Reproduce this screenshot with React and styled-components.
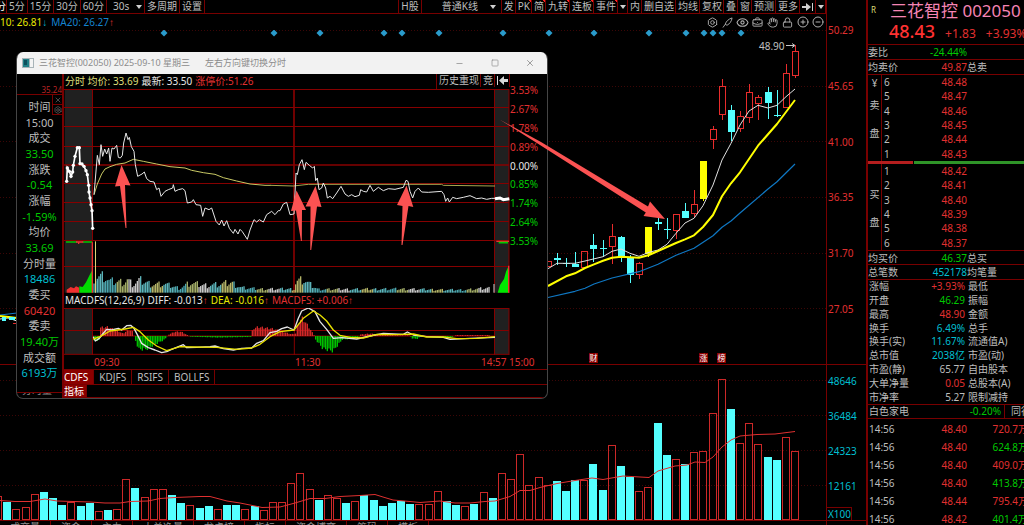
import React, { useState } from "react";
import styled, { createGlobalStyle, css } from "styled-components";
import {
  Bolt,
  BriefcaseBusiness,
  CircleMinus,
  CirclePlus,
  Eye,
  Hand,
  Lock,
  Minus,
  Square,
  X,
} from "lucide-react";

const colors = {
  line: "#780000",
  grid: "#3c0606",
  red: "#e03030",
  candle: "#e82c2c",
  green: "#00c800",
  cyan: "#54ffff",
  teal: "#00bfd0",
  yellow: "#ffff00",
  text: "#bdbdbd",
  white: "#e6e6e6",
  arrow: "#fb5252",
};

const tones = {
  red: colors.red,
  green: colors.green,
  cyan: colors.teal,
  grey: colors.text,
  white: colors.white,
  yellow: "#e8e800",
  olive: "#dede78",
  blue: "#1484d0",
};

//----------------------------------------------------------------
// data

const periods = ["5分", "15分", "30分", "60分"];

const tools = [
  { label: "发" },
  { label: "PK", mark: true },
  { label: "简", mark: true },
  { label: "九转", mark: true },
  { label: "连板", mark: true },
  { label: "事件", mark: true },
  { icon: "down", name: "更多事件" },
  { label: "内" },
  { label: "删自选" },
  { label: "均线" },
  { label: "复权" },
  { label: "叠" },
  { label: "窗" },
  { label: "预测" },
  { label: "更多" },
  { icon: "end", name: "移到末尾" },
  { icon: "down", name: "展开" },
];

const priceTicks = ["50.29", "45.65", "41.00", "36.35", "31.70", "27.05"];
const volumeTicks = ["48646", "36484", "24323", "12161"];

// [type, body top, body bottom, high, low]
const candles = [
  ["r", 261, 267, 261, 267],
  ["c", 258, 260, 253, 265],
  ["c", 263, 264, 258, 267],
  ["c", 264, 267, 252, 267],
  ["r", 251, 268, 251, 268],
  ["c", 245, 249, 234, 262],
  ["c", 248, 249, 240, 257],
  ["r", 236, 247, 224, 264],
  ["c", 237, 257, 236, 262],
  ["c", 257, 275, 255, 283],
  ["r", 263, 275, 262, 279],
  ["y", 227, 254, 227, 257],
  ["c", 222, 224, 218, 230],
  ["c", 229, 230, 218, 239],
  ["r", 214, 231, 214, 239],
  ["c", 211, 218, 203, 218],
  ["r", 204, 214, 190, 217],
  ["y", 161, 199, 161, 201],
  ["r", 129, 140, 126, 149],
  ["r", 86, 115, 79, 120],
  ["c", 110, 132, 105, 141],
  ["r", 116, 129, 111, 132],
  ["r", 92, 118, 84, 123],
  ["r", 97, 104, 95, 120],
  ["c", 92, 103, 87, 119],
  ["c", 115, 116, 90, 117],
  ["r", 73, 108, 64, 108],
  ["r", 51, 76, 45, 78],
];

const volumes = (
  "r24 c18 r11 r13 r26 c28 c22 c15 r18 c14 c17 r9 c10 r11 r41 c32 r23 r31 r31 c25 c17 r15 " +
  "c12 c14 r11 c15 c15 r11 c14 r10 r18 r18 r37 r47 r31 c20 r25 r22 c17 r19 c25 c20 c14 c17 " +
  "c19 c16 r16 r16 r29 c19 c15 r14 c16 r28 c22 r47 r41 r66 r35 r43 r35 c39 c29 c40 r40 c56 " +
  "c30 r75 c54 c43 r29 r33 c97 c65 r61 c56 r68 r69 r107 r141 c111 r77 r97 r76 c63 c60 r83 r69"
)
  .split(" ")
  .map((v) => [v[0], Number(v.slice(1))]);

const diamonds = [
  164, 274, 320, 384, 402, 439, 503, 549, 594, 649, 686, 704, 713, 722, 741,
];

const events = [
  { x: 594, label: "财" },
  { x: 704, label: "涨" },
  { x: 722, label: "榜" },
];

const footerTabs = ["成交量", "资金", "主力", "大单净量", "龙虎榜", "指标", "资金博弈", "筹码", "模板"];

const sells = [
  [6, "48.48"],
  [5, "48.47"],
  [4, "48.46"],
  [3, "48.45"],
  [2, "48.44"],
  [1, "48.43"],
];

const buys = [
  [1, "48.42"],
  [2, "48.41"],
  [3, "48.40"],
  [4, "48.39"],
  [5, "48.38"],
  [6, "48.37"],
];

const stats = [
  ["涨幅", "+3.93%", "red", "最低"],
  ["开盘", "46.29", "green", "振幅"],
  ["最高", "48.90", "red", "金额"],
  ["换手", "6.49%", "cyan", "总手"],
  ["换手(实)", "11.67%", "cyan", "流通值A)"],
  ["总市值", "2038亿", "cyan", "市盈(动)"],
  ["市盈(静)", "65.77", "grey", "自由股本"],
  ["大单净量", "0.05", "red", "总股本(A)"],
  ["市净率", "5.27", "grey", "限制减持"],
];

const deals = [
  ["14:56", "48.40", "720.7万", "red"],
  ["14:56", "48.40", "624.8万", "green"],
  ["14:56", "48.40", "409.0万", "red"],
  ["14:56", "48.40", "413.8万", "green"],
  ["14:56", "48.44", "795.4万", "red"],
  ["14:56", "48.42", "401.4万", "green"],
];

const details = [
  ["时间", "15:00", "grey"],
  ["成交", "33.50", "green"],
  ["涨跌", "-0.54", "green"],
  ["涨幅", "-1.59%", "green"],
  ["均价", "33.69", "green"],
  ["分时量", "18486", "cyan"],
  ["委买", "60420", "red"],
  ["委卖", "19.40万", "green"],
  ["成交额", "6193万", "cyan"],
];

const percents = [
  ["3.53%", "red"],
  ["2.67%", "red"],
  ["1.78%", "red"],
  ["0.89%", "red"],
  ["0.00%", "white"],
  ["0.85%", "green"],
  ["1.74%", "green"],
  ["2.64%", "green"],
  ["3.53%", "green"],
];

const indicators = ["CDFS", "KDJFS", "RSIFS", "BOLLFS"];

// pre-open auction prices
const auction = [
  [170, 400], [172, 360], [178, 370], [183, 385], [188, 372], [190, 352],
  [195, 325], [202, 299], [208, 299], [210, 347], [216, 348], [222, 355],
  [228, 368], [232, 380], [236, 412], [237, 432], [240, 450], [243, 470],
  [246, 488], [248, 541],
];

// height of the minute bars over the day
const minuteShape = [
  [90, 55], [118, 58], [135, 40], [180, 38], [188, 46], [205, 28], [225, 44],
  [260, 30], [300, 30], [345, 16], [375, 34], [420, 26], [470, 30], [500, 36],
  [530, 18], [580, 13], [690, 13], [694, 40], [715, 46], [740, 26], [760, 12],
  [830, 12], [1020, 13], [1140, 10], [1200, 10], [1270, 16],
];

const macdShape = [
  [88, -16], [104, -14], [106, 28], [130, 30], [160, 16], [175, 8], [192, 20],
  [205, 14], [209, -4], [222, -44], [245, -44], [270, -28], [300, -12],
  [311, 4], [330, 14], [350, 14], [368, 3], [375, -2], [460, -5], [560, -3],
  [564, 24], [580, 30], [625, 24], [680, 6], [693, 8], [700, 42], [712, 60],
  [725, 42], [748, 3], [753, -12], [775, -42], [805, -50], [833, -12],
  [880, -6], [888, 5], [915, 8], [970, 3], [1035, 2], [1044, -9], [1060, -9],
  [1066, -2], [1160, -4], [1175, 3], [1280, 3],
];

const shapeAt = (shape, x) => {
  const n = shape.findIndex((p) => p[0] >= x);
  if (n < 1) return shape[n === 0 ? 0 : shape.length - 1][1];
  const [x0, y0] = shape[n - 1];
  const [x1, y1] = shape[n];
  return y0 + ((y1 - y0) * (x - x0)) / (x1 - x0);
};

const steps = Array.from({ length: 238 }, (_, i) => 88 + i * 5);
const barTones = ["#5cb4ba", "#b4b468", "#5cb4ba", "#c8c8c8", "#a3ad68", "#4ba6ae"];

//----------------------------------------------------------------

const App = () => {
  return (
    <>
      <GlobalStyle />
      <Page>
        <Workspace>
          <ChartColumn>
            <MainToolbar />
            <LegendRow>
              <Tone tone="yellow">
                10: 26.81<Mark $tone="cyan">↓</Mark>
              </Tone>
              <Tone tone="blue">
                MA20: 26.27<Mark $tone="red">↑</Mark>
              </Tone>
              <ChartIcons />
            </LegendRow>
            <PriceChart />
            <VolumeChart />
            <Footer>
              {footerTabs.map((name) => (
                <FooterTab key={name}>{name}</FooterTab>
              ))}
            </Footer>
          </ChartColumn>
          <AxisColumn>
            <PriceAxis>
              {priceTicks.map((t) => (
                <span key={t}>{t}</span>
              ))}
            </PriceAxis>
            <VolumeAxis>
              {volumeTicks.map((t) => (
                <span key={t}>{t}</span>
              ))}
            </VolumeAxis>
            <UnitRow>
              <UnitBox>X100</UnitBox>
            </UnitRow>
          </AxisColumn>
          <IntradayWindow />
          <Arrows />
        </Workspace>
        <QuotePanel />
      </Page>
    </>
  );
};
export default App;

const DownIcon = () => (
  <svg width="6" height="4" viewBox="0 0 6 4">
    <path d="M0 0H6L3 4Z" fill="#d0d0d0" />
  </svg>
);

const EndIcon = () => (
  <svg width="12" height="8" viewBox="0 0 12 8">
    <path d="M0 3H4V0L9 4L4 8V5H0ZM10 0H11V8H10Z" fill="#d0d0d0" />
  </svg>
);

const MainToolbar = () => {
  const [period, setPeriod] = useState("30s");
  return (
    <Toolbar>
      <FirstButton>分</FirstButton>
      {periods.map((p) => (
        <ToolButton key={p} onClick={() => setPeriod(p)}>
          {p}
        </ToolButton>
      ))}
      <SelectBox>
        <ToolSelect
          aria-label="周期"
          value={period}
          onChange={(e) => setPeriod(e.target.value)}
        >
          <option>30s</option>
          {periods.map((p) => (
            <option key={p}>{p}</option>
          ))}
        </ToolSelect>
        <DownIcon />
      </SelectBox>
      <ToolButton>多周期</ToolButton>
      <ToolButton>设置</ToolButton>
      <ToolGroup>
        <ToolButton>H股</ToolButton>
        <SelectBox $wide>
          <ToolSelect aria-label="K线类型">
            <option>普通K线</option>
          </ToolSelect>
          <DownIcon />
        </SelectBox>
        {tools.map((t, i) => (
          <ToolButton key={i} $tight $mark={t.mark} aria-label={t.name}>
            {t.label}
            {t.icon === "down" && <DownIcon />}
            {t.icon === "end" && <EndIcon />}
          </ToolButton>
        ))}
      </ToolGroup>
    </Toolbar>
  );
};

const ChartIcons = () => (
  <IconRow>
    <IconButton aria-label="设置">
      <Bolt size={11} />
    </IconButton>
    <IconButton aria-label="画线">
      <svg width="11" height="11" viewBox="0 0 24 24" fill="none" stroke="currentColor" strokeWidth="2">
        <path d="M2 23L7 16M7 16C9 9 15 4 22 2C21 9 17 15 11 18Z" />
      </svg>
    </IconButton>
    <IconButton aria-label="显示">
      <Eye size={13} />
    </IconButton>
    <IconButton aria-label="工具箱">
      <BriefcaseBusiness size={11} />
    </IconButton>
    <IconButton aria-label="拖动">
      <Hand size={11} />
    </IconButton>
    <IconButton aria-label="锁定">
      <Lock size={11} />
    </IconButton>
    <IconButton aria-label="放大">
      <CirclePlus size={12} />
    </IconButton>
    <IconButton aria-label="缩小">
      <CircleMinus size={12} />
    </IconButton>
  </IconRow>
);

const PriceChart = () => (
  <PriceSvg viewBox="0 30 826 334" preserveAspectRatio="xMinYMin">
    {[30.5, 86.5, 141.5, 197.5, 253.5, 308.5].map((y) => (
      <path key={y} d={`M0 ${y}H826`} stroke={colors.grid} strokeDasharray="1 2" />
    ))}
    {diamonds.map((x) => (
      <path key={x} d={`M${x} 29.5l3.5 3.5l-3.5 3.5l-3.5 -3.5Z`} fill="#2a9bcb" />
    ))}
    {candles.map(([type, top, bottom, high, low], i) => {
      const x = Math.round(795 - (27 - i) * 9.16);
      const fill = { r: "none", c: colors.cyan, y: colors.yellow }[type];
      const stroke = type === "r" ? colors.candle : fill;
      return (
        <g key={i} stroke={stroke} fill={fill} shapeRendering="crispEdges">
          <path d={`M${x + 0.5} ${high}V${top}M${x + 0.5} ${bottom}V${low}`} />
          <rect x={x - 2.5} y={top + 0.5} width="6" height={Math.max(bottom - top - 1, 0)} />
          {bottom - top < 2 && <path d={`M${x - 3} ${top + 0.5}H${x + 4}M${x + 0.5} ${high}V${low}`} />}
        </g>
      );
    })}
    <g fill="none" strokeLinejoin="round">
      <path
        d="M548 297.5L575 291.3L585 288.3L594 284L612 278L639 271.7L658 264.3L676 255.3L694 248.3L713 235.7L722 227.3L731 221L740 213L768 189L777 181.7L795 164M0 315L17 313"
        stroke="#0f78c4"
        strokeWidth="1.2"
      />
      <path
        d="M548 268.7L557 263.3L575 263.3L585 261L603 256.7L612 251.3L621 249L630 253.3L639 256.3L649 252.3L658 250L667 244.3L676 233.3L685 223L694 218.3L703 205.7L713 185L722 160L731 143.3L740 125L749 111L758 105.3L768 108L777 105.3L786 96.7L795 89M0 319L8 318L17 321"
        stroke="#e0e0e0"
      />
      <path
        d="M548 286L566 276.3L575 273.3L585 268L594 264.3L603 260.7L612 257.7L621 256.7L639 257.7L649 255L667 247L676 243L685 239.3L694 235.3L703 227L713 215L722 196.3L731 183.3L740 172.3L758 145.7L777 124L795 100M0 316L17 318"
        stroke={colors.yellow}
        strokeWidth="2"
      />
    </g>
    <path d="M2 317H6V321H2ZM9 317H15V320H9Z" fill={colors.cyan} />
    <path d="M13 323.5H17" stroke={colors.candle} />
    <ChartText x="759" y="50">
      48.90
    </ChartText>
    <path d="M786 45.5H794M792 43.5L795 45.5L792 47.5" stroke="#c8c8c8" fill="none" />
    {events.map((e) => (
      <g key={e.x}>
        <rect x={e.x - 5} y="353" width="9" height="10" fill="#8a0000" />
        <EventText x={e.x - 0.5} y="361">
          {e.label}
        </EventText>
      </g>
    ))}
  </PriceSvg>
);

const VolumeChart = () => (
  <VolumeSvg viewBox="0 365 826 155" preserveAspectRatio="xMinYMin">
    {[380.5, 415.5, 450.5, 485.5].map((y) => (
      <path key={y} d={`M0 ${y}H826`} stroke={colors.grid} strokeDasharray="1 2" />
    ))}
    {volumes.map(([type, h], i) => {
      const x = Math.round(795 - (volumes.length - 1 - i) * 9.16);
      return type === "c" ? (
        <rect key={i} x={x - 4} y={520 - h} width="8" height={h} fill={colors.cyan} />
      ) : (
        <rect key={i} x={x - 3.5} y={520.5 - h} width="7" height={h - 1} fill="none" stroke="#cc2828" />
      );
    })}
    <path
      d="M0 500.5L15 501.5L30 501.5L45 499L57 501L90 502L105 503L120 503L130 501.5L148 501L160 498.5L175 497.5L200 496.5L210 496.5L227 501L240 503L255 506L262 507.5L280 507L295 503L310 498.5L325 498.5L340 496.5L360 495.5L375 494.5L383 497L393 500L410 501.5L420 502.5L440 501L455 503L470 503L485 501.5L495 501L510 496.5L520 490.5L530 490.5L540 487.5L557 483.5L575 480.5L592 478L603 479.5L623 476L640 477L649 477.5L658 471L675 466L687 465L695 462L705 462.5L713 457L722 447L731 440L740 436L757 434.5L775 434L795 431.5"
      stroke={colors.red}
      fill="none"
    />
  </VolumeSvg>
);

//----------------------------------------------------------------

const IntradayWindow = () => {
  const [tab, setTab] = useState("CDFS");
  return (
    <Window>
      <TitleBar>
        <svg width="12" height="10" viewBox="0 0 12 10">
          <rect width="12" height="10" fill="#a8b4b8" />
          <rect x="1" y="1" width="6" height="8" fill="#1f7f86" />
          <rect x="8" y="1" width="3" height="8" fill="#f4f4f4" />
          <rect x="2" y="2" width="3" height="5" fill="#0b4f5c" />
        </svg>
        <span>三花智控(002050) 2025-09-10 星期三</span>
        <Hint>左右方向键切换分时</Hint>
        <WindowButtons>
          <WindowButton aria-label="最小化">
            <Minus size={9} />
          </WindowButton>
          <WindowButton aria-label="最大化">
            <Square size={8} />
          </WindowButton>
          <WindowButton aria-label="关闭">
            <X size={10} />
          </WindowButton>
        </WindowButtons>
      </TitleBar>
      <WindowBody>
        <DetailColumn>
          <TopPrice>35.24</TopPrice>
          <Details>
            {details.map(([name, value, tone]) => (
              <React.Fragment key={name}>
                <dt>{name}</dt>
                <DetailValue $tone={tone}>{value}</DetailValue>
              </React.Fragment>
            ))}
          </Details>
          <DetailButtons>
            <SmallButton aria-label="关闭明细">
              <X size={8} />
            </SmallButton>
            <SmallButton aria-label="明细设置">
              <Bolt size={8} />
            </SmallButton>
          </DetailButtons>
          <HiddenTab>分时量</HiddenTab>
        </DetailColumn>
        <WindowMain>
          <Upper>
            <Plots>
              <InfoRow>
                <Tone tone="olive">分时 均价: 33.69</Tone>
                <Tone tone="white">最新: 33.50</Tone>
                <Tone tone="red">涨停价:51.26</Tone>
                <InfoButtons>
                  <ToolButton $tight>历史重现</ToolButton>
                  <ToolButton $tight>竞</ToolButton>
                  <ToolButton $tight aria-label="收起">
                    <svg width="11" height="9" viewBox="0 0 11 9">
                      <path d="M0 0H1V9H0ZM2 4.5L7 0V3H11V6H7V9Z" fill="#d8d8d8" />
                    </svg>
                  </ToolButton>
                </InfoButtons>
              </InfoRow>
              <MinuteChart />
              <MacdRow>
                <Tone tone="white">MACDFS(12,26,9)</Tone>
                <Tone tone="white">
                  DIFF: -0.013<Mark $tone="red">↑</Mark>
                </Tone>
                <Tone tone="yellow">
                  DEA: -0.016<Mark $tone="red">↑</Mark>
                </Tone>
                <Tone tone="red">
                  MACDFS: +0.006<Mark $tone="red">↑</Mark>
                </Tone>
              </MacdRow>
              <MacdChart />
            </Plots>
            <PercentAxis>
              {percents.map(([label, tone], i) => (
                <Tone key={i} tone={tone}>
                  {label}
                </Tone>
              ))}
            </PercentAxis>
          </Upper>
          <TimeAxis>
            <span />
            <span>09:30</span>
            <span>11:30</span>
            <span>14:57</span>
            <span>15:00</span>
          </TimeAxis>
          <TabRow>
            {indicators.map((name) => (
              <Tab key={name} $active={tab === name} onClick={() => setTab(name)}>
                {name}
              </Tab>
            ))}
          </TabRow>
          <TabRow $last>
            <Tab $active $short>
              指标
            </Tab>
          </TabRow>
        </WindowMain>
      </WindowBody>
    </Window>
  );
};

// three units of the view box make one pixel
const MinuteChart = () => (
  <PlotSvg $height={204} viewBox="0 0 1338 612" preserveAspectRatio="xMinYMin">
    <rect x="2" y="1" width="84" height="610" fill="#202020" />
    <rect x="1293" y="1" width="42" height="610" fill="#202020" />
    <g stroke="#860000" fill="none" strokeWidth="3">
      <path d="M0 1.5H1335M0 55.5H1335M0 112.5H1335M0 172.5H1335M0 283.5H1335M0 340.5H1335M0 397.5H1335M0 454.5H1335M0 532.5H1335" />
      <path d="M0 228H1335M690 0V612" strokeWidth="5" />
      <path d="M85.5 0V612M1291.5 0V612M1335 0V612" />
    </g>
    <g>
      {steps.map((x, i) => {
        if (x > 1285) return null;
        const h = shapeAt(minuteShape, x) * (0.5 + (((i * 37) % 17) / 17) * 0.7);
        return (
          <rect key={x} x={x} y={611 - h} width="4" height={h} fill={barTones[(i * 5 + (i % 7)) % 6]} />
        );
      })}
      <rect x="93" y="457" width="3" height="154" fill="#d8d878" />
      <rect x="1288" y="585" width="4" height="26" fill="#a0a0a0" />
    </g>
    <g>
      <path d="M8 611V602L20 594L30 598L36 592L46 596V611Z" fill="#f03030" />
      <path d="M46 611V592L56 594L66 580L78 556L84 545V611Z" fill="#00dc00" />
      <path d="M6 459H40M56 459H84" stroke="#00c800" strokeWidth="4" />
      <path d="M36 459H58M42 463H46" stroke="#f03030" strokeWidth="4" />
      <path d="M85 460V611" stroke="#f03030" strokeWidth="4" />
      <path d="M1301 611L1308 588L1320 570L1326 548L1334 530V611Z" fill="#00e800" />
      <path d="M1334 530V611M1297 457H1335" stroke="#f03030" strokeWidth="4" />
      <path d="M1304 461H1332" stroke="#00c800" strokeWidth="5" />
    </g>
    <g transform="translate(-162 -123)" fill="none" strokeWidth="3">
      <path
        d="M252 440L262 408L275 378L285 363L300 356L320 349L345 345L370 334L400 340L440 348L480 356L525 360L545 367L580 374L615 379L640 389L680 399L720 408L765 412L782 412"
        stroke="#c8c864"
      />
      <path
        d="M252 440L262 322L268 350L273 290L278 325L284 303L290 318L296 300L300 340L306 300L312 303L320 292L325 328L331 330L337 322L341 285L348 255L354 275L358 268L364 296L372 310L376 350L383 385L396 378L403 372L410 392L420 400L432 402L440 425L447 420L453 445L465 430L475 425L488 420L490 410L495 430L505 425L518 422L525 428L532 465L545 462L550 455L558 470L572 472L578 505L585 480L597 485L605 480L618 520L628 531L635 516L642 534L650 518L658 541L670 556L675 544L684 558L690 544L697 551L712 574L720 546L732 515L740 522L748 515L760 522L770 500L785 490"
        stroke="#e6e6e6"
      />
      <polyline points={auction.join(" ")} stroke="#fff" strokeWidth="5" />
      {auction.map(([x, y]) => (
        <circle key={`${x}-${y}`} cx={x} cy={y} r="5" fill="#fff" />
      ))}
    </g>
    <g transform="translate(618 -123)" fill="none" strokeWidth="3">
      <path d="M0 412L70 414L115 409L515 409L520 412L675 414" stroke="#a8a850" />
      <path
        d="M5 490L15 500L25 488L30 488L40 468L50 463L60 500L72 498L78 375L82 380L88 350L96 335L103 365L108 343L118 352L128 360L133 355L137 398L142 390L147 425L155 420L160 405L167 420L172 450L180 445L188 452L200 435L213 415L225 438L235 445L245 440L255 446L268 442L272 425L280 430L290 432L300 412L310 430L325 418L340 428L355 422L375 424L400 418L408 397L414 400L420 430L428 450L435 430L445 420L455 432L475 433L515 430L522 440L527 460L533 450L538 462L548 448L560 452L580 448L600 443L620 452L635 450L650 454L665 451L675 451"
        stroke="#e6e6e6"
      />
      <path d="M675 452L690 450L700 455L718 452" stroke="#fff" strokeWidth="9" />
    </g>
  </PlotSvg>
);

const MacdChart = () => (
  <PlotSvg $height={47} viewBox="0 0 1338 141" preserveAspectRatio="xMinYMin">
    <rect x="2" y="1" width="84" height="138" fill="#202020" />
    <rect x="1293" y="1" width="42" height="138" fill="#202020" />
    <path
      d="M0 1.5H1335M0 67.5H1335M86 84H1293M0 139H1335M85.5 0V141M691 0V141M1291.5 0V141M1335 0V141"
      stroke="#860000"
      fill="none"
      strokeWidth="3"
    />
    {steps.map((x, i) => {
      const h = shapeAt(macdShape, x) * (0.8 + (i % 3) * 0.1);
      return (
        <rect
          key={x}
          x={x}
          y={h > 0 ? 84 - h : 84}
          width="4"
          height={Math.abs(h)}
          fill={h > 0 ? "#d02828" : "#00c000"}
        />
      );
    })}
    <g fill="none" strokeWidth="4" strokeLinejoin="round">
      <path
        d="M88 86L94 99L106 91L116 78L128 64L143 66L163 61L173 66L188 53L200 52L210 61L223 86L233 106L253 119L273 126L293 134L308 131L323 124L338 118L358 110L368 119L398 118L438 116L453 114L478 122L508 126L533 121L563 120L578 106L598 98L618 74L638 70L653 62L670 57L690 66L703 31L713 9L733 0L753 11L768 41L788 64L808 91L833 89L878 93L918 84L958 76L1018 79L1030 72L1048 81L1088 86L1138 88L1158 94L1218 91L1293 88"
        stroke="#e6e6e6"
      />
      <path
        d="M88 93L108 86L138 69L183 63L208 58L228 71L253 96L278 114L308 128L348 116L388 117L458 118L518 124L563 120L588 109L618 86L648 71L690 66L718 31L748 9L768 21L788 39L808 66L828 82L858 88L898 90L938 79L998 80L1048 78L1088 87L1138 87L1178 92L1238 91L1293 86"
        stroke="#e8e000"
      />
    </g>
  </PlotSvg>
);

const Arrows = () => (
  <ArrowLayer viewBox="0 0 866 525" preserveAspectRatio="xMinYMin">
    <path d="M121.5 165L130.5 185.5L125 185L126.5 228H125.5L120 186L115 186.5Z" />
    <path d="M296.5 190.5L306 210L302 210L301.8 241H301L296 210.5L291 211Z" />
    <path d="M315.5 186L321.5 207L317 206.5L311.2 250H310.3L310.5 206.5L305.5 206.5Z" />
    <path d="M406.5 185.5L413.3 207L408.5 206L402.5 245H401.5L402.5 206L397 205Z" />
    <path d="M499.5 119.5L541 142L648 206.5L650 201.5L665 219L643.5 216L645.8 212.5L540 145Z" />
  </ArrowLayer>
);

//----------------------------------------------------------------

const QuotePanel = () => (
  <Panel>
    <Quote>
      <Flag>R</Flag>
      <StockName>三花智控 002050</StockName>
      <QuoteRow>
        <LastPrice>48.43</LastPrice>
        <span>+1.83</span>
        <span>+3.93%</span>
      </QuoteRow>
    </Quote>
    <SummaryRow>
      <span>委比</span>
      <Tone tone="green">-24.44%</Tone>
    </SummaryRow>
    <SummaryRow>
      <span>均卖价</span>
      <Tone tone="red">49.87</Tone>
      <span>总卖</span>
    </SummaryRow>
    <Depth>
      <DepthSide>
        <span>¥</span>
        <span>卖</span>
        <span>盘</span>
      </DepthSide>
      <DepthRows rows={sells} />
    </Depth>
    <Ratio />
    <Depth>
      <DepthSide>
        <span />
        <span>买</span>
        <span>盘</span>
      </DepthSide>
      <DepthRows rows={buys} />
    </Depth>
    <SummaryRow $top>
      <span>均买价</span>
      <Tone tone="green">46.37</Tone>
      <span>总买</span>
    </SummaryRow>
    <SummaryRow>
      <span>总笔数</span>
      <Tone tone="cyan">452178</Tone>
      <span>均笔量</span>
    </SummaryRow>
    <StatTable>
      <tbody>
        {stats.map(([name, value, tone, next]) => (
          <tr key={name}>
            <th scope="row">{name}</th>
            <Cell $tone={tone}>{value}</Cell>
            <th scope="row">{next}</th>
          </tr>
        ))}
      </tbody>
    </StatTable>
    <Sector>
      <span>白色家电</span>
      <Tone tone="green">-0.20%</Tone>
      <Peers>同行</Peers>
    </Sector>
    <DealTable>
      <tbody>
        {deals.map(([time, price, amount, tone], i) => (
          <tr key={i}>
            <th scope="row">{time}</th>
            <Cell $tone="red">{price}</Cell>
            <Cell $tone={tone}>{amount}</Cell>
          </tr>
        ))}
      </tbody>
    </DealTable>
  </Panel>
);

const DepthRows = ({ rows }) => (
  <DepthTable>
    <tbody>
      {rows.map(([level, price]) => (
        <tr key={level}>
          <th scope="row">{level}</th>
          <Cell $tone="red">{price}</Cell>
        </tr>
      ))}
    </tbody>
  </DepthTable>
);

const Tone = ({ tone, children }) => <ToneSpan $tone={tone}>{children}</ToneSpan>;

//----------------------------------------------------------------
// styles

const GlobalStyle = createGlobalStyle`
  * {
    box-sizing: border-box;
  }
  body {
    margin: 0;
    background: #000;
    color: ${colors.text};
    font-family: "Noto Sans", "Noto Sans CJK SC", sans-serif;
    font-size: 10px;
    line-height: 14px;
    overflow: hidden;
  }
  button, select {
    font: inherit;
    color: inherit;
    background: none;
    border: 0;
    border-radius: 0;
    margin: 0;
    padding: 0;
    cursor: pointer;
  }
  svg {
    display: block;
  }
`;

const ToneSpan = styled.span`
  color: ${(props) => tones[props.$tone]};
`;

// trend arrow after a number
const Mark = styled.span`
  color: ${(props) => tones[props.$tone]};
  font-family: "Liberation Sans", sans-serif;
  font-weight: 700;
  line-height: 1;
`;

const Page = styled.div`
  display: flex;
  height: 100vh;
  overflow: hidden;
  white-space: nowrap;
`;

const Workspace = styled.main`
  flex: 1;
  min-width: 0;
  display: grid;
  grid-template-columns: minmax(0, 1fr) 40px;
  position: relative;
`;

const ChartColumn = styled.div`
  min-width: 0;
`;

const Toolbar = styled.div`
  display: flex;
  height: 14px;
  border-bottom: 1px solid ${colors.line};
  overflow: hidden;
`;

const ToolGroup = styled.div`
  display: flex;
  margin-left: auto;
  border-left: 1px solid ${colors.line};
`;

const ToolButton = styled.button`
  display: flex;
  align-items: center;
  flex-shrink: 0;
  height: 13px;
  padding: 0 ${(props) => (props.$tight ? 1 : 2)}px 0 2px;
  border-right: 1px solid ${colors.line};
  line-height: 13px;
  ${(props) =>
    props.$mark &&
    css`
      background: linear-gradient(225deg, #ff2020 2px, transparent 2px);
    `}
  &:hover {
    color: white;
  }
`;

// scrolled half out of view at the left edge
const FirstButton = styled(ToolButton)`
  justify-content: flex-end;
  width: 7px;
  padding: 0;
  overflow: hidden;
`;

const SelectBox = styled.label`
  display: flex;
  align-items: center;
  justify-content: space-between;
  width: ${(props) => (props.$wide ? 80 : 38)}px;
  padding: 0 ${(props) => (props.$wide ? 5 : 2)}px 0 ${(props) => (props.$wide ? 20 : 6)}px;
  border-right: 1px solid ${colors.line};
`;

const ToolSelect = styled.select`
  appearance: none;
  height: 13px;
  line-height: 13px;
  option {
    background: #000;
  }
`;

const LegendRow = styled.div`
  display: flex;
  align-items: center;
  gap: 4px;
  height: 16px;
`;

const IconRow = styled.div`
  display: flex;
  gap: 2px;
  margin-left: auto;
  margin-right: 2px;
`;

const IconButton = styled.button`
  display: grid;
  place-items: center;
  width: 13px;
  height: 14px;
  color: #b0b0b0;
`;

const PriceSvg = styled.svg`
  width: 100%;
  height: 335px;
  border-bottom: 1px solid ${colors.line};
`;

const VolumeSvg = styled.svg`
  width: 100%;
  height: 156px;
  border-bottom: 1px solid ${colors.line};
`;

const ChartText = styled.text`
  font-size: 10px;
  fill: #c0c0c0;
`;

const EventText = styled.text`
  font-size: 8px;
  text-anchor: middle;
  fill: white;
`;

const Footer = styled.nav`
  display: flex;
  height: 4px;
  overflow: hidden;
`;

const FooterTab = styled.button`
  padding: 0 10px;
  border-right: 1px solid ${colors.line};
  color: #909090;
  line-height: 13px;
`;
//----------------------------------------------------------------
const AxisColumn = styled.div`
  border-left: 1px solid ${colors.line};
`;

const PriceAxis = styled.div`
  display: flex;
  flex-direction: column;
  justify-content: space-between;
  height: 365px;
  padding: 23px 1px 48px;
  border-bottom: 1px solid ${colors.line};
  color: ${colors.red};
`;

const VolumeAxis = styled.div`
  display: flex;
  flex-direction: column;
  justify-content: space-between;
  height: 142px;
  padding: 9px 1px 14px;
  color: ${colors.teal};
`;

const UnitRow = styled.div`
  border-bottom: 1px solid ${colors.line};
`;

const UnitBox = styled.div`
  width: fit-content;
  border: 1px solid ${colors.line};
  border-width: 1px 1px 0 0;
  padding-left: 1px;
  line-height: 12px;
  color: ${colors.teal};
`;

const ArrowLayer = styled.svg`
  position: absolute;
  top: 0;
  left: 0;
  width: 100%;
  height: 525px;
  pointer-events: none;
  fill: ${colors.arrow};
`;
//----------------------------------------------------------------
const Window = styled.section`
  position: absolute;
  top: 52px;
  left: 16px;
  width: 532px;
  border: 1px solid #454545;
  border-top: 0;
  border-radius: 7px;
  background: #000;
  overflow: hidden;
`;

const TitleBar = styled.header`
  display: flex;
  align-items: center;
  height: 22px;
  padding-left: 5px;
  gap: 5px;
  background: #f2f2f2;
  color: #8c8c8c;
  font-size: 9px;
`;

const Hint = styled.span`
  margin-left: 10px;
`;

const WindowButtons = styled.div`
  display: flex;
  margin-left: auto;
`;

const WindowButton = styled.button`
  display: grid;
  place-items: center;
  width: 35px;
  height: 22px;
`;

const WindowBody = styled.div`
  display: flex;
`;

const DetailColumn = styled.div`
  position: relative;
  width: 47px;
  border-right: 2px solid ${colors.line};
  overflow: hidden;
`;

const TopPrice = styled.div`
  height: 21px;
  padding-top: 9px;
  border-bottom: 1px solid ${colors.line};
  color: #b82424;
  font-size: 8px;
  text-align: right;
`;

const Details = styled.dl`
  display: grid;
  grid-auto-rows: 1fr;
  height: 298px;
  margin: 0;
  padding: 5px 0 10px;
  border-bottom: 1px solid ${colors.line};
  font-size: 11px;
  text-align: center;
`;

const DetailValue = styled.dd`
  margin: 0;
  color: ${(props) => tones[props.$tone]};
`;

const DetailButtons = styled.div`
  position: absolute;
  top: 21px;
  right: 0;
  display: grid;
`;

const SmallButton = styled.button`
  display: grid;
  place-items: center;
  width: 10px;
  height: 10px;
  border: solid ${colors.line};
  border-width: 0 0 1px 1px;
  color: #707070;
`;

const HiddenTab = styled.div`
  display: flex;
  align-items: flex-end;
  height: 4px;
  padding-left: 5px;
  overflow: hidden;
  color: #8c8c8c;
`;

const WindowMain = styled.div`
  flex: 1;
  min-width: 0;
`;

const Upper = styled.div`
  display: flex;
`;

const Plots = styled.div`
  width: 446px;
`;

const InfoRow = styled.div`
  display: flex;
  height: 15px;
  gap: 3px;
  padding-left: 1px;
`;

const InfoButtons = styled.div`
  display: flex;
  margin-left: auto;
  border-left: 1px solid ${colors.line};
`;

const PlotSvg = styled.svg`
  width: 100%;
  height: ${(props) => props.$height}px;
`;

const MacdRow = styled.div`
  display: flex;
  height: 15px;
  gap: 3px;
  padding-left: 1px;
`;

const PercentAxis = styled.div`
  display: flex;
  flex-direction: column;
  justify-content: space-between;
  height: 174px;
  padding-top: 9px;
`;

const TimeAxis = styled.div`
  display: grid;
  grid-template-columns: 30px 201px 1fr 28px 38px;
  height: 14px;
  color: ${colors.red};
`;

const TabRow = styled.div`
  display: flex;
  height: ${(props) => (props.$last ? 14 : 15)}px;
  border-top: 1px solid ${colors.line};
  ${(props) =>
    props.$last &&
    css`
      border-bottom: 1px solid ${colors.line};
    `}
`;

const Tab = styled.button`
  padding: 0 ${(props) => (props.$short ? 2 : 5)}px;
  border-right: 1px solid ${colors.line};
  line-height: 13px;
  ${(props) =>
    props.$active &&
    css`
      padding-left: 0;
      background: #8b0000;
      color: white;
    `}
`;
//----------------------------------------------------------------
const Panel = styled.aside`
  width: 158px;
  border-left: 2px solid ${colors.line};
  overflow: hidden;
`;

const Quote = styled.div`
  display: grid;
  grid-template-columns: 21px 1fr;
  height: 45px;
  border-bottom: 1px solid ${colors.line};
`;

const Flag = styled.span`
  padding: 3px 0 0 3px;
  color: #dede78;
  font-size: 8px;
`;

const StockName = styled.span`
  padding-left: 1px;
  color: #f584b4;
  font-size: 17px;
  line-height: 21px;
`;

const QuoteRow = styled.div`
  grid-column: 2;
  display: flex;
  align-items: baseline;
  gap: 10px;
  color: ${colors.red};
  font-size: 12px;
  line-height: 20px;
`;

const LastPrice = styled.strong`
  color: #ff3232;
  font-size: 18px;
  font-weight: 500;
`;

const SummaryRow = styled.div`
  display: grid;
  grid-template-columns: 40px 59px 1fr;
  height: 15px;
  border-bottom: 1px solid ${colors.line};
  ${(props) =>
    props.$top &&
    css`
      border-top: 1px solid ${colors.line};
    `}
  span:nth-child(2) {
    text-align: right;
  }
`;

const Depth = styled.div`
  display: flex;
  height: 86px;
`;

const DepthSide = styled.div`
  display: grid;
  grid-template-rows: 16px 28px 28px;
  align-items: center;
  justify-items: center;
  width: 14px;
  border-right: 1px solid ${colors.line};
`;

const table = css`
  border-collapse: collapse;
  td,
  th {
    padding: 0;
    font-weight: 400;
    text-align: left;
  }
`;

const Cell = styled.td`
  && {
    text-align: right;
  }
  color: ${(props) => tones[props.$tone]};
`;

const DepthTable = styled.table`
  ${table}
  width: 85px;
  height: 86px;
  th {
    padding-left: 2px;
  }
`;

const Ratio = styled.div`
  height: 3px;
  background: linear-gradient(90deg, #b41e1e 45px, #000 45px, #000 46px, #2f9428 46px);
`;

const StatTable = styled.table`
  ${table}
  width: 100%;
  height: 124px;
  line-height: 13px;
  th:first-child {
    width: 50px;
    padding-left: 1px;
  }
  td {
    width: 47px;
  }
  th:last-child {
    padding-left: 3px;
  }
`;

const Sector = styled.div`
  display: grid;
  grid-template-columns: 79px 53px 1fr;
  height: 15px;
  padding-left: 1px;
  border: solid ${colors.line};
  border-width: 1px 0;
  line-height: 13px;
  span:nth-child(2) {
    text-align: right;
  }
`;

const Peers = styled.span`
  margin-left: 3px;
  padding-left: 6px;
  border-left: 1px solid ${colors.line};
`;

// the amounts run on past the edge of the panel
const DealTable = styled.table`
  ${table}
  min-width: 160px;
  margin-top: 1px;
  tr {
    height: 18px;
  }
  th {
    width: 50px;
    padding-left: 1px;
  }
  td {
    width: 49px;
  }
  td:last-child {
    width: 61px;
  }
`;
